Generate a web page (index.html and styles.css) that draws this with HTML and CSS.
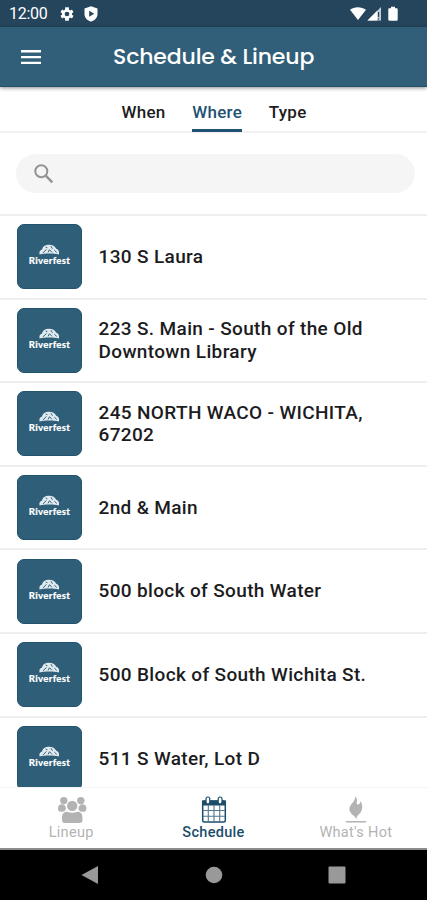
FILE: index.html
```
<!DOCTYPE html>
<html lang="en">
  <head>
  <title>Schedule &amp; Lineup</title>
  <meta charset="utf-8">
  <meta name="viewport" content="width=device-width, initial-scale=1">
  <link rel="stylesheet" href="styles.css">
  </head>

  <body>

  <div class="app">

    <div class="status">
      <span class="clock">12:00</span>
      <svg class="gear" width="16" height="16" viewBox="0 0 24 24"><path fill="#fff" fill-rule="evenodd" d="M19.400 13a7.500 7.500 0 0 0 0-2l2.300-1.700-2.200-3.900-2.700 1.200a7.500 7.500 0 0 0-1.800-1L14.700 2H9.300L9 5.600a7.500 7.500 0 0 0-1.800 1L4.500 5.400 2.300 9.300 4.600 11a7.500 7.500 0 0 0 0 2l-2.300 1.700 2.200 3.900 2.700-1.200a7.500 7.500 0 0 0 1.800 1l.3 3.600h5.400l.3-3.600a7.500 7.500 0 0 0 1.800-1l2.700 1.200 2.200-3.900zM12 15.500a3.500 3.500 0 1 1 0-7 3.500 3.500 0 0 1 0 7z"/></svg>
      <svg class="shield" width="14" height="16" viewBox="0 0 14 16"><path fill="#fff" fill-rule="evenodd" d="M7 .3L13.500 2.500V8c0 3.800-2.700 6.300-6.500 7.700C3.200 14.300.5 11.800.5 8V2.500zM5.200 4.700v6l5-3z"/></svg>
      <span class="spacer"></span>
      <svg width="50" height="16" viewBox="0 0 50 16">
        <path fill="#fff" d="M2 3.800C6 .3 13.500 .3 18 3.800L10 14z"/>
        <path fill="#c3ced6" d="M33 1v13.500H19.500z"/>
        <path fill="#fff" d="M29 5v9.500h-9.500z"/>
        <path fill="#24455c" d="M30 6h1.200v5H30zM30 12.300h1.200v1.200H30z"/>
        <path fill="#fff" d="M43 .8h4v1.400h1.500c.8 0 1.200.4 1.200 1.200v10.100c0 .8-.4 1.200-1.200 1.200h-7c-.8 0-1.200-.4-1.200-1.200V3.400c0-.8.400-1.200 1.200-1.200H43z"/>
      </svg>
    </div>

    <div class="header">
      <svg class="menu" width="20" height="16" viewBox="0 0 20 16"><path d="M0 2.300h20M0 8.100h20M0 13.900h20" stroke="#fff" stroke-width="2.400"/></svg>
      <h1>Schedule &amp; Lineup</h1>
    </div>

    <div class="tabs">
      <a class="tab">When</a>
      <a class="tab active">Where</a>
      <a class="tab">Type</a>
    </div>

    <div class="search">
      <div class="search-box">
        <svg width="20" height="20" viewBox="0 0 20 20" fill="none" stroke="#949494"><circle cx="7.300" cy="7.300" r="6" stroke-width="2"/><path d="M11.700 11.700l6.600 6.600" stroke-width="2.500"/></svg>
      </div>
    </div>

    <div class="list">
      <div class="row">
        <svg class="thumb" viewBox="0 0 65 65">
          <!-- logo, reused by the rows below -->
          <g id="logo">
            <path d="M22.300 30.500c-.8-2.500.3-4.600 2.500-5.200.4-2.800 2.600-4.800 6-5 4.500-.3 7.500 1.400 8.700 4.200 2.300.8 3.500 3 2.700 6-5-1.500-15-1.500-19.900 0z" fill="#dfe9ee"/>
            <path d="M25.800 28.800l3.500-3.600M31 28.200l1.500-2.700 2.500 2.700M28.500 22.700l1.800.8M34 21.800l1.500 2.700M37.500 26l2.500 2.300" fill="none" stroke="#2f5e78" stroke-width="1"/>
            <text class="logo-text" x="11" y="40.500" textLength="43" lengthAdjust="spacingAndGlyphs">Riverfest</text>
          </g>
        </svg>
        <span>130 S Laura</span>
      </div>
      <div class="row"><svg class="thumb" viewBox="0 0 65 65"><use href="#logo"/></svg><span>223 S. Main - South of the Old<br>Downtown Library</span></div>
      <div class="row"><svg class="thumb" viewBox="0 0 65 65"><use href="#logo"/></svg><span>245 NORTH WACO - WICHITA,<br>67202</span></div>
      <div class="row"><svg class="thumb" viewBox="0 0 65 65"><use href="#logo"/></svg><span>2nd &amp; Main</span></div>
      <div class="row"><svg class="thumb" viewBox="0 0 65 65"><use href="#logo"/></svg><span>500 block of South Water</span></div>
      <div class="row"><svg class="thumb" viewBox="0 0 65 65"><use href="#logo"/></svg><span>500 Block of South Wichita St.</span></div>
      <div class="row"><svg class="thumb" viewBox="0 0 65 65"><use href="#logo"/></svg><span>511 S Water, Lot D</span></div>
    </div>

    <div class="nav">
      <a class="nav-item">
        <svg class="people" width="30" height="28" viewBox="0 0 30 28" fill="#b3b3b3">
          <circle cx="6.800" cy="4.600" r="3.700"/><circle cx="23.800" cy="4.600" r="3.700"/>
          <path d="M1 12c0-2.500 1.600-3.800 3.700-3.800 2.600 0 4.200 1.800 4.200 4 0 2-1.500 3.600-3.600 3.600H3.500C1.800 15.800 1 14.500 1 12zM29.400 12c0-2.500-1.600-3.800-3.700-3.800-2.600 0-4.200 1.800-4.200 4 0 2 1.500 3.600 3.600 3.600h1.800c1.700 0 2.500-1.300 2.500-3.800z"/>
          <circle cx="15.200" cy="9.900" r="5.200"/>
          <path d="M5 22c0-4 1.500-6.300 5-6.300 3 1.500 7.500 1.500 10.500 0 3.500 0 5 2.300 5 6.300v2c0 2-1 3-3 3H8c-2 0-3-1-3-3z"/>
        </svg>
        <span>Lineup</span>
      </a>
      <a class="nav-item active">
        <svg class="calendar" width="26" height="28" viewBox="0 0 26 28">
          <rect x="1.700" y="5" width="22.600" height="21" rx="1.500" fill="#fff" stroke="#1b4d6b" stroke-width="1.500"/>
          <path d="M1 4.500h24v5H1z" fill="#1b4d6b"/>
          <path d="M7.300 9v17M13 9v17M18.700 9v17M2 14.500h22M2 20.200h22" stroke="#517890" stroke-width="1.100"/>
          <g fill="#fff" stroke="#1b4d6b" stroke-width="1.200"><rect x="5" y="1" width="3.800" height="7" rx="1.900"/><rect x="17.200" y="1" width="3.800" height="7" rx="1.900"/></g>
        </svg>
        <span>Schedule</span>
      </a>
      <a class="nav-item">
        <svg class="flame" width="22" height="28" viewBox="0 0 22 28" fill="#b3b3b3">
          <path d="M10 .3c2.300 2.200 2.300 4.200 1.700 6.200-.3 1.300.4 2.300 1.600 2 1.500-.4 2-1.800 2.200-3.300 2.500 3.300 2.500 8.800-.8 12.300-2 2-3.200 3-3.200 5.500-1-2-2.700-3-4.300-4.500C3.800 15.500 3.500 11.500 6.500 8 8.700 5.500 10.500 3.500 10 .3z"/>
          <path d="M1 25h20v1.500H1z"/>
        </svg>
        <span>What's Hot</span>
      </a>
    </div>

    <div class="system">
      <svg width="18" height="20" viewBox="0 0 18 20"><path d="M17 1v18L.5 10z" fill="#999"/></svg>
      <svg width="18" height="18" viewBox="0 0 18 18"><circle cx="9" cy="9" r="8.300" fill="#999"/></svg>
      <svg width="18" height="18" viewBox="0 0 18 18"><rect x=".5" y=".5" width="17" height="17" rx="1" fill="#999"/></svg>
    </div>

  </div>

  </body>

</html>
```
FILE: styles.css
```
* {
  box-sizing: border-box;
}
html, body {
  height: 100%;
}
body {
  margin: 0;
  background: #fff;
  color: #1c1c1e;
  font-family: Roboto, "Liberation Sans", sans-serif;
  overflow: hidden;
}
svg {
  display: block;
  flex: none;
}

.app {
  height: 900px;
  display: flex;
  flex-direction: column;
}

.status {
  flex: none;
  height: 27px;
  padding: 0 29px 0 9px;
  display: flex;
  align-items: center;
  background: #24455c;
}
.clock {
  color: #fff;
  font-size: 16px;
  line-height: 27px;
  letter-spacing: -0.25px;
}
.gear {
  margin-left: 11px;
}
.shield {
  margin-left: 9px;
}
.spacer {
  flex: 1;
}

.header {
  flex: none;
  height: 60px;
  display: flex;
  align-items: center;
  background: #315f79;
  border-bottom: 1px solid #21536e;
  box-shadow: 0 1px 4px rgba(0,0,0,0.45);
  z-index: 1;
}
.menu {
  margin-left: 21px;
}
h1 {
  margin: 0 0 0 72px;
  color: #fff;
  font: 500 22px/30px Poppins, Inter, sans-serif;
  letter-spacing: -0.15px;
  white-space: nowrap;
}

.tabs {
  flex: none;
  height: 46px;
  padding-left: 1px;
  display: flex;
  justify-content: center;
  gap: 26.5px;
  border-bottom: 2px solid #f1f1f1;
}
.tab {
  height: 45px;
  padding-top: 14px;
  font-size: 17px;
  line-height: 23px;
  font-weight: 500;
  letter-spacing: 0.3px;
}
.tab.active {
  color: #1f5273;
  border-bottom: 3px solid #1f5273;
}

.search {
  flex: none;
  height: 83px;
  padding: 21px 12px 0 16px;
  border-bottom: 2px solid #efefef;
}
.search-box {
  height: 38.5px;
  border-radius: 20px;
  padding: 10px 18px;
  background: #f5f5f5;
}

.list {
  flex: 1;
  min-height: 0;
  overflow: hidden;
}
.row {
  height: 83.6px;
  padding: 0 16.5px;
  display: flex;
  align-items: center;
  gap: 17px;
  border-bottom: 2px solid #eee;
  font-size: 19px;
  line-height: 22.6px;
  font-weight: 500;
  letter-spacing: 0.35px;
  white-space: nowrap;
}
.row span {
  padding-top: 1px;
}
.thumb {
  width: 65px;
  height: 65px;
  border-radius: 7px;
  border: 1px solid #22546f;
  background: #2f5e78;
}
.logo-text {
  font: 900 10.5px Lato, sans-serif;
  fill: #fff;
  stroke: #fff;
  stroke-width: 0.15px;
}

.nav {
  flex: none;
  height: 63px;
  display: grid;
  grid-template-columns: repeat(3, 1fr);
  border-top: 1px solid #f3f3f3;
  border-bottom: 2px solid #8c8c8c;
}
.nav-item {
  display: flex;
  flex-direction: column;
  align-items: center;
  padding-top: 8px;
  color: #b3b3b3;
  font-size: 14.5px;
  line-height: 17px;
  letter-spacing: 0.3px;
}
.nav-item.active {
  color: #1b4d6b;
  font-weight: 500;
}
.people {
  margin-left: 2px;
}
.calendar {
  margin-left: 1px;
}
.flame {
  margin-left: 1px;
}

.system {
  flex: none;
  height: 50px;
  padding: 0 81px;
  display: flex;
  align-items: center;
  justify-content: space-between;
  background: #000;
}
```
